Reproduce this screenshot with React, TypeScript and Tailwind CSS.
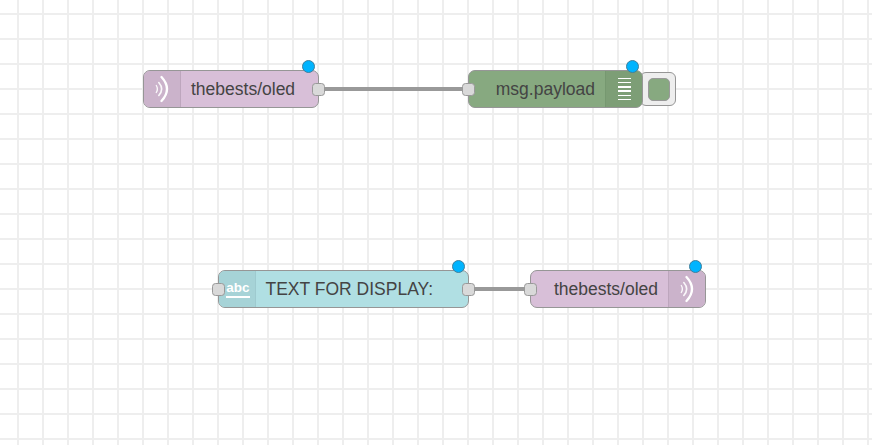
const Port = ({ className }: { className: string }) => (
  <div className={`absolute top-[11.5px] w-[13px] h-[13px] rounded-[3.5px] border border-[#999] bg-[#d9d9d9] ${className}`} />
);

const StatusDot = () => (
  <div className="absolute right-[3px] top-[-11px] w-[13px] h-[13px] rounded-full border border-[#3f7f9c] bg-[#00b4ff]" />
);

const WaveIcon = () => (
  <svg width="14" height="34" viewBox="0 0 14 34" fill="none" stroke="#fff" strokeLinecap="round">
    <path d="M1.300 13.500Q3.500 17 1.300 20.500" strokeWidth="1.400" opacity="0.9" />
    <path d="M3.800 10.500Q9.500 17 3.800 23.500" strokeWidth="1.600" opacity="0.9" />
    <path d="M6.500 5Q17.500 17 6.500 29" strokeWidth="2.300" />
  </svg>
);

const DebugLines = () => (
  <div className="flex flex-col gap-[2.700px]">
    {[0, 1, 2, 3, 4, 5].map((i) => (
      <div key={i} className="w-[13px] h-[1.500px] bg-white" />
    ))}
  </div>
);

const Wire = ({ className }: { className: string }) => (
  <div className={`absolute h-[4px] bg-[#999] ${className}`} />
);

export default function App() {
  return (
    <div
      className="relative w-[872px] h-[445px] overflow-hidden bg-white bg-[linear-gradient(to_right,#eeeeee_2px,transparent_2px),linear-gradient(to_bottom,#eeeeee_2px,transparent_2px)] bg-[size:25px_25px] bg-[position:17px_13px] text-[#444] text-[17.5px] leading-none font-['Liberation_Sans',Arial,sans-serif]"
    >
      <Wire className="left-[320px] top-[87px] w-[146px]" />
      <Wire className="left-[470px] top-[287px] w-[60px]" />

      {/* mqtt in */}
      <div className="absolute left-[143px] top-[70px] w-[175.500px] h-[38px] rounded-[7px] border border-[#969696] bg-[#d8bfd8] flex items-center">
        <div className="w-[37px] h-full shrink-0 rounded-l-[6px] border-r border-[#bda6bd] bg-[#cbb3cb] flex items-center justify-center">
          <WaveIcon />
        </div>
        <span className="ml-[10px] mt-[1px] whitespace-nowrap">thebests/oled</span>
        <Port className="right-[-7px]" />
        <StatusDot />
      </div>

      {/* debug */}
      <div className="absolute left-[640px] top-[72px] w-[36px] h-[34px] rounded-[6px] border border-[#969696] bg-[#eeeeee] flex items-center justify-end pr-[5px]">
        <div className="w-[22px] h-[23px] rounded-[5px] border border-[#999] bg-[#87a980]" />
      </div>
      <div className="absolute left-[467.500px] top-[70px] w-[175.500px] h-[38px] rounded-[7px] border border-[#969696] bg-[#87a980] flex items-center justify-end">
        <span className="mr-[10px] mt-[1px] whitespace-nowrap">msg.payload</span>
        <div className="w-[37px] h-full shrink-0 rounded-r-[6px] border-l border-[#769870] bg-[#7d9e76] flex items-center justify-center">
          <DebugLines />
        </div>
        <Port className="left-[-7px]" />
        <StatusDot />
      </div>

      {/* inject */}
      <div className="absolute left-[217.500px] top-[270px] w-[251px] h-[38px] rounded-[7px] border border-[#969696] bg-[#b0dfe3] flex items-center">
        <div className="w-[37px] h-full shrink-0 rounded-l-[6px] border-r border-[#9ecacf] bg-[#a6d3d7] flex items-center justify-center pl-[3px]">
          <span className="text-white text-[13.500px] font-bold border-b-2 border-white leading-[14px] pb-[1px]">abc</span>
        </div>
        <span className="ml-[10px] mt-[1px] whitespace-nowrap">TEXT FOR DISPLAY:</span>
        <Port className="left-[-7px]" />
        <Port className="right-[-7px]" />
        <StatusDot />
      </div>

      {/* mqtt out */}
      <div className="absolute left-[530px] top-[270px] w-[176px] h-[38px] rounded-[7px] border border-[#969696] bg-[#d8bfd8] flex items-center justify-end">
        <span className="mr-[10px] mt-[1px] whitespace-nowrap">thebests/oled</span>
        <div className="w-[37px] h-full shrink-0 rounded-r-[6px] border-l border-[#bda6bd] bg-[#cbb3cb] flex items-center justify-center">
          <WaveIcon />
        </div>
        <Port className="left-[-7px]" />
        <StatusDot />
      </div>
    </div>
  );
}
